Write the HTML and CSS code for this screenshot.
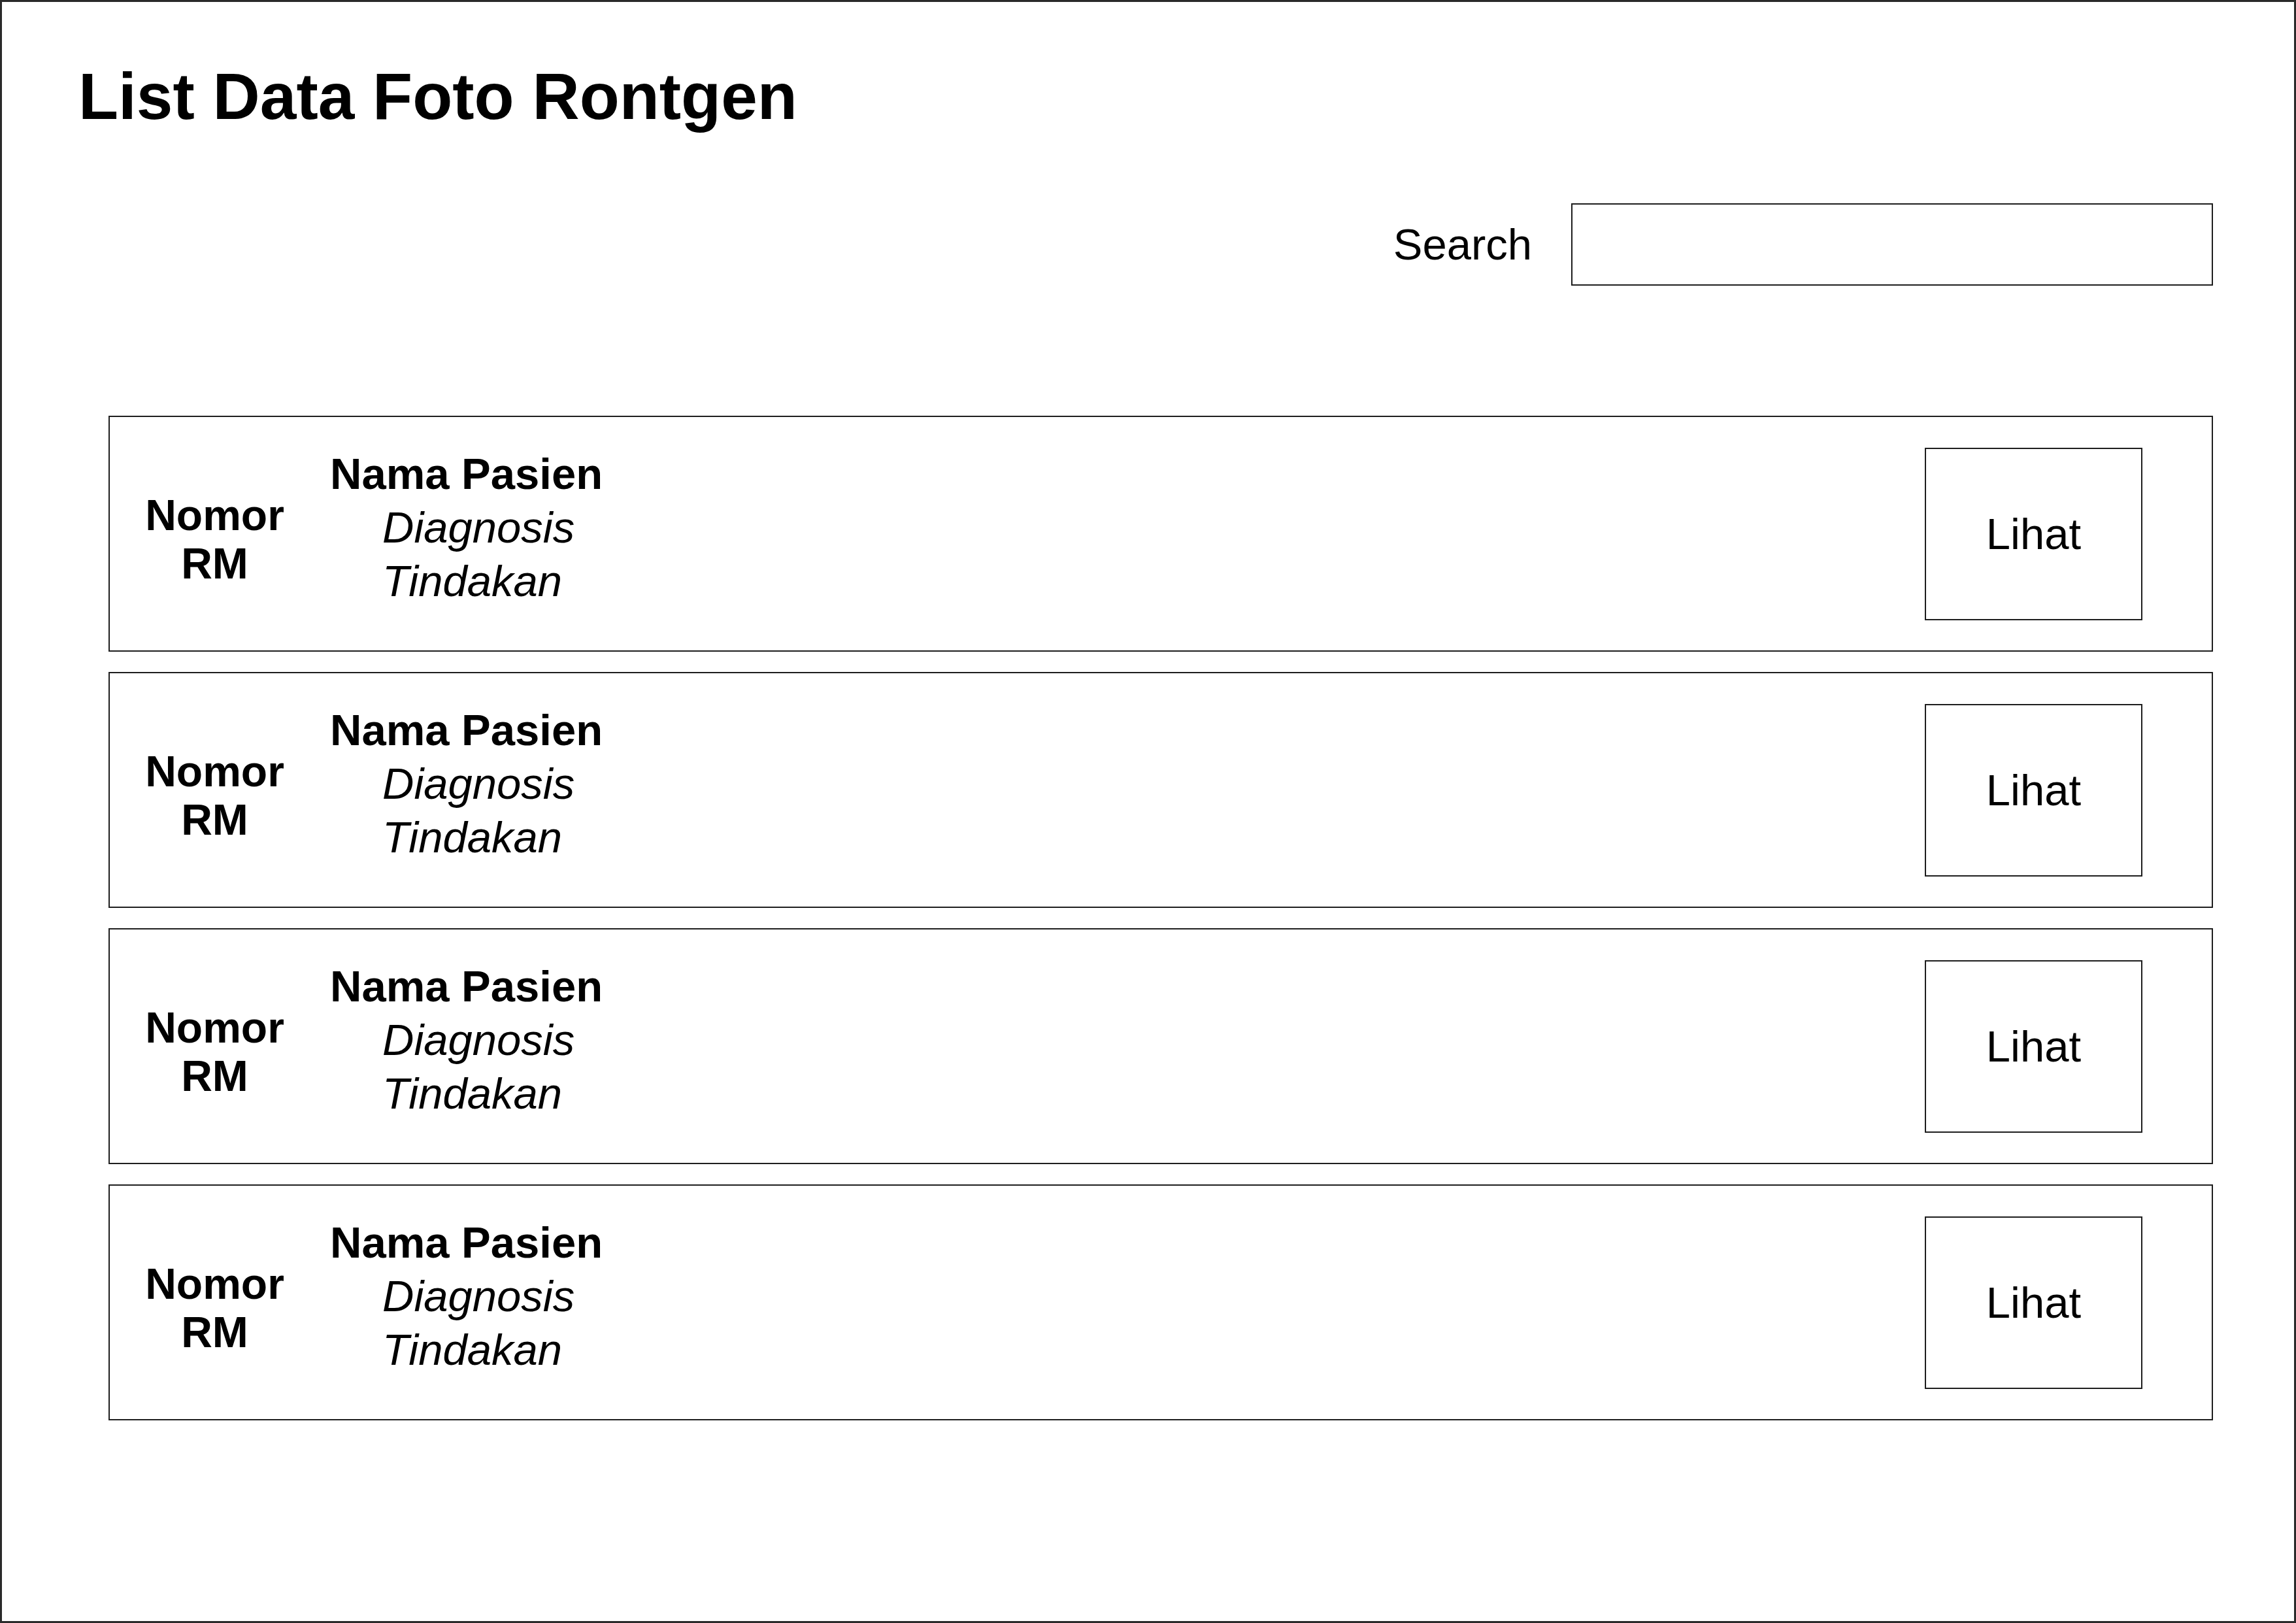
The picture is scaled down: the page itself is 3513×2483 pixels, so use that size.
FILE: index.html
```html
<!DOCTYPE html>
<html lang="id">
<head>
<meta charset="utf-8">
<title>List Data Foto Rontgen</title>
<link rel="stylesheet" href="styles.css">
</head>
<body>
<div class="page">
  <h1 class="title">List Data Foto Rontgen</h1>
  <div class="search-row">
    <label class="search-label" for="q">Search</label>
    <div class="search-input" id="q"></div>
  </div>
  <div class="list">
    <div class="card">
      <div class="rm">Nomor<br>RM</div>
      <div class="info">
        <div class="name">Nama Pasien</div>
        <div class="sub">Diagnosis</div>
        <div class="sub">Tindakan</div>
      </div>
      <div class="btn">Lihat</div>
    </div>
    <div class="card">
      <div class="rm">Nomor<br>RM</div>
      <div class="info">
        <div class="name">Nama Pasien</div>
        <div class="sub">Diagnosis</div>
        <div class="sub">Tindakan</div>
      </div>
      <div class="btn">Lihat</div>
    </div>
    <div class="card">
      <div class="rm">Nomor<br>RM</div>
      <div class="info">
        <div class="name">Nama Pasien</div>
        <div class="sub">Diagnosis</div>
        <div class="sub">Tindakan</div>
      </div>
      <div class="btn">Lihat</div>
    </div>
    <div class="card">
      <div class="rm">Nomor<br>RM</div>
      <div class="info">
        <div class="name">Nama Pasien</div>
        <div class="sub">Diagnosis</div>
        <div class="sub">Tindakan</div>
      </div>
      <div class="btn">Lihat</div>
    </div>
  </div>
</div>
</body>
</html>
```
FILE: styles.css
```css
html, body {
  margin: 0;
  padding: 0;
  background: #fff;
}
body {
  font-family: "Liberation Sans", Arial, sans-serif;
  color: #000;
}
.page {
  width: 3513px;
  height: 2483px;
  box-sizing: border-box;
  border: 3px solid #2a2a2a;
  padding: 94px 124px 0 117px;
}
.title {
  margin: 0;
  font-size: 100px;
  line-height: 100px;
  font-weight: bold;
}
.search-row {
  margin-top: 114px;
  display: flex;
  justify-content: flex-end;
  align-items: center;
  gap: 60px;
}
.search-label {
  font-size: 67px;
  line-height: 80px;
}
.search-input {
  width: 982px;
  height: 126px;
  box-sizing: border-box;
  border: 2px solid #1e1e1e;
}
.list {
  margin-top: 199px;
  margin-left: 46px;
  display: flex;
  flex-direction: column;
  gap: 31px;
}
.card {
  height: 361px;
  box-sizing: border-box;
  border: 2px solid #1e1e1e;
  display: flex;
  align-items: center;
  padding: 0 106px 0 50px;
}
.rm {
  width: 221px;
  text-align: center;
  font-size: 66px;
  line-height: 74px;
  font-weight: bold;
  margin-top: 16px;
}
.info {
  margin-left: 66px;
  margin-bottom: 20px;
  font-size: 67px;
  line-height: 82px;
}
.name {
  font-weight: bold;
}
.sub {
  font-style: italic;
  padding-left: 80px;
}
.btn {
  margin-left: auto;
  width: 333px;
  height: 264px;
  box-sizing: border-box;
  border: 2px solid #1e1e1e;
  display: flex;
  align-items: center;
  justify-content: center;
  font-size: 67px;
}
```
